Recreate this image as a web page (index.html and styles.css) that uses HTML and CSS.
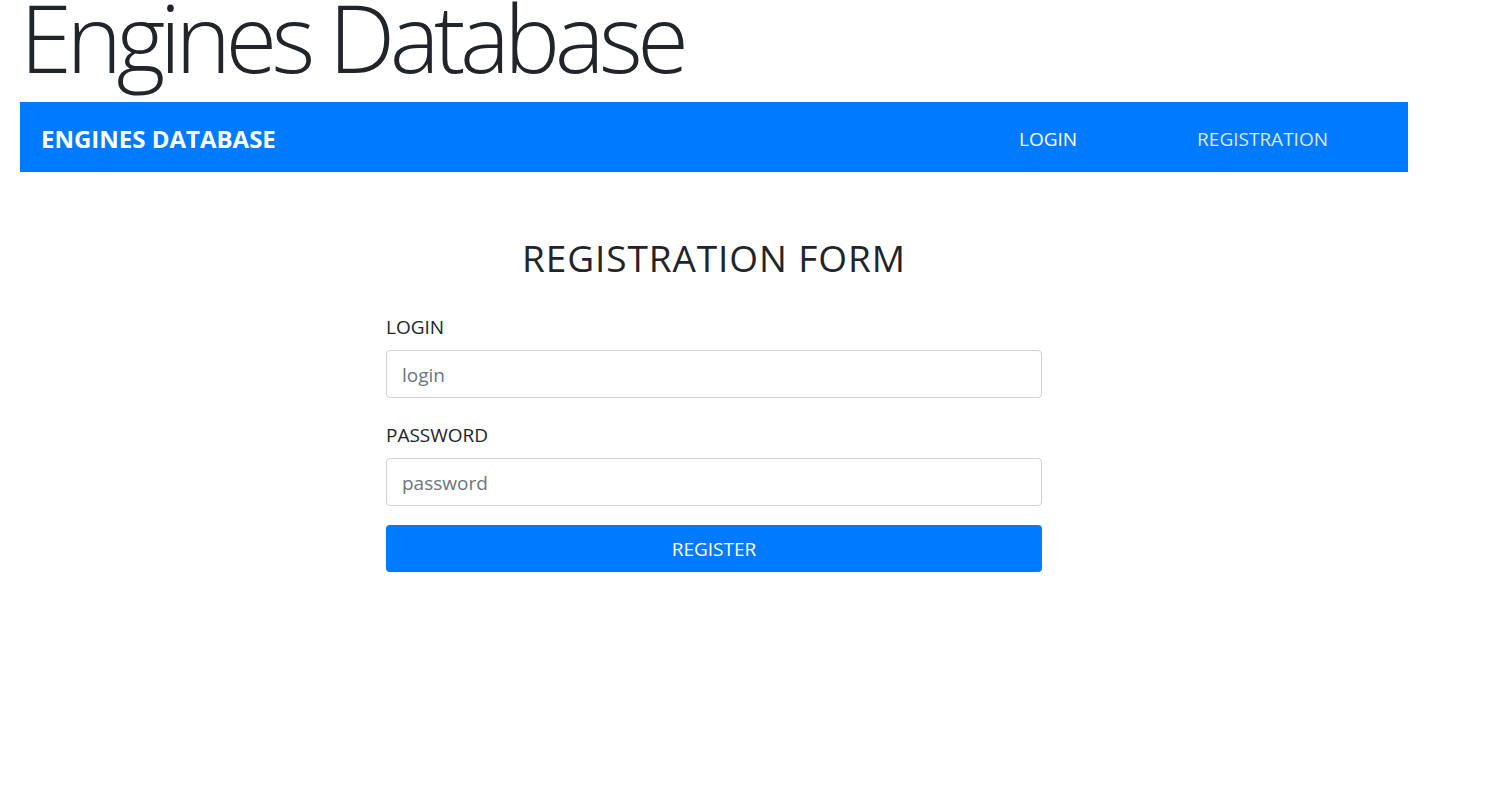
FILE: index.html
```html
<!DOCTYPE html>
<html lang="en">
<head>
<meta charset="utf-8">
<title>Engines Database</title>
<link rel="stylesheet" href="styles.css">
</head>
<body>
<div class="page">
  <h1 class="title">Engines Database</h1>
  <nav class="navbar">
    <a class="brand" href="#">ENGINES DATABASE</a>
    <ul class="nav">
      <li><a class="nav-link active" href="#">LOGIN</a></li>
      <li><a class="nav-link" href="#">REGISTRATION</a></li>
    </ul>
  </nav>
  <main class="content">
    <h2 class="form-title">REGISTRATION FORM</h2>
    <form class="form">
      <div class="group">
        <label class="label" for="login">LOGIN</label>
        <input class="input" id="login" type="text" placeholder="login">
      </div>
      <div class="group">
        <label class="label" for="password">PASSWORD</label>
        <input class="input" id="password" type="password" placeholder="password">
      </div>
      <button class="btn" type="button">REGISTER</button>
    </form>
  </main>
</div>
</body>
</html>
```
FILE: styles.css
```css
* { box-sizing: border-box; }
html, body { margin: 0; padding: 0; background: #fff; }
body {
  font-family: "Open Sans", "Noto Sans", "Liberation Sans", sans-serif;
  color: #212529;
}
.page {
  width: 1388px;
  margin-left: 20px;
}
.title {
  margin: 0 0 28px 0;
  font-size: 94px;
  line-height: 74px;
  letter-spacing: -5.5px;
  font-weight: 300;
  color: #212529;
  white-space: nowrap;
}
.navbar {
  height: 70px;
  background: #007bff;
  display: flex;
  align-items: center;
  justify-content: space-between;
  padding: 3px 20px 0 21px;
}
.brand {
  color: #fff;
  font-weight: 700;
  font-size: 24px;
  text-decoration: none;
  white-space: nowrap;
}
.nav {
  list-style: none;
  margin: 0;
  padding: 0;
  display: flex;
}
.nav-link {
  display: block;
  padding: 0 60px;
  font-size: 19px;
  color: rgba(255, 255, 255, 0.85);
  text-decoration: none;
}
.nav-link.active { color: #fff; }
.content {
  display: flex;
  flex-direction: column;
  align-items: center;
}
.form-title {
  margin: 64px 0 0 0;
  font-size: 37px;
  line-height: 44px;
  letter-spacing: 0.9px;
  font-weight: 400;
}
.form {
  width: 656px;
  margin-top: 35px;
}
.group { margin-bottom: 25px; }
.group:nth-child(2) { margin-bottom: 19px; }
.label {
  display: block;
  font-size: 19px;
  line-height: 24px;
  margin-bottom: 11px;
}
.input {
  display: block;
  width: 100%;
  height: 48px;
  padding: 1px 15px 0;
  font-family: inherit;
  font-size: 19px;
  color: #495057;
  border: 1px solid #ced4da;
  border-radius: 4px;
  background: #fff;
  outline: none;
}
.input::placeholder { color: #6c757d; }
.btn {
  display: block;
  width: 100%;
  height: 47px;
  padding-top: 2px;
  border: none;
  border-radius: 4px;
  background: #007bff;
  color: #fff;
  font-family: inherit;
  font-size: 19px;
  cursor: pointer;
}
```
